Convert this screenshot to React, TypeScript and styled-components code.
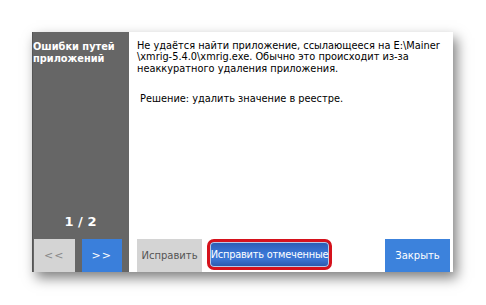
import React from "react";
import styled, { createGlobalStyle } from "styled-components";

const Global = createGlobalStyle`
  html, body { margin: 0; padding: 0; background: #ffffff; }
  body { font-family: "DejaVu Sans", Verdana, sans-serif; }
`;

const Page = styled.div`
  width: 486px;
  height: 305px;
  padding: 32px 0 0 32px;
  box-sizing: border-box;
  background: #ffffff;
`;

const Dialog = styled.div`
  width: 421px;
  height: 240px;
  display: flex;
  background: #ffffff;
  box-shadow: 4px 6px 12px rgba(0, 0, 0, 0.5);
`;

const Sidebar = styled.div`
  width: 97px;
  box-sizing: border-box;
  background: #666666;
  display: flex;
  flex-direction: column;
  padding: 0 7px 0 1px;
  border-left: 1px solid #555;
`;

const SideTitle = styled.div`
  color: #ffffff;
  font-weight: bold;
  font-size: 9.8px;
  line-height: 12.3px;
  padding-top: 9px;
  margin-left: -1px;
`;

const Counter = styled.div`
  margin-top: auto;
  color: #ffffff;
  font-weight: bold;
  font-size: 13px;
  text-align: center;
  padding-left: 5px;
  margin-bottom: 10px;
`;

const NavRow = styled.div`
  display: flex;
  gap: 7px;
`;

const NavButton = styled.div<{ $active?: boolean }>`
  width: 41px;
  height: 33px;
  display: flex;
  align-items: center;
  justify-content: center;
  background: ${(p) => (p.$active ? "#3a7fdb" : "#d4d4d4")};
  color: ${(p) => (p.$active ? "#ffffff" : "#888888")};
  font-size: 11px;
  letter-spacing: 1px;
`;

const Main = styled.div`
  flex: 1;
  display: flex;
  flex-direction: column;
  padding: 8px 3px 0 8px;
`;

const Message = styled.div`
  color: #000000;
  font-size: 9.8px;
  line-height: 11.3px;
  white-space: pre;
`;

const Solution = styled.div`
  color: #000000;
  font-size: 9.8px;
  line-height: 11.3px;
  margin-top: 19px;
  white-space: pre;
`;

const ButtonRow = styled.div`
  margin-top: auto;
  display: flex;
  align-items: flex-start;
  gap: 5px;
`;

const Button = styled.div<{ $variant: "gray" | "blue" }>`
  width: 65px;
  height: 33px;
  display: flex;
  align-items: center;
  justify-content: center;
  font-size: 10px;
  background: ${(p) => (p.$variant === "blue" ? "#3c82dc" : "#d4d4d4")};
  color: ${(p) => (p.$variant === "blue" ? "#ffffff" : "#555555")};
`;

const Spacer = styled.div`
  flex: 1;
`;

const HighlightButton = styled.div`
  width: 125px;
  height: 31px;
  box-sizing: border-box;
  border: 3px solid #d5121c;
  border-radius: 7px;
  background: linear-gradient(to bottom, #2b5bb0 0%, #3a76d6 45%, #3a74d2 70%, #2a56a8 100%);
  box-shadow: inset 0 0 0 1px #b9c8e6;
  color: #ffffff;
  font-size: 9.8px;
  letter-spacing: -0.2px;
  display: flex;
  align-items: center;
  justify-content: center;
  white-space: nowrap;
`;

export default function App() {
  return (
    <>
      <Global />
      <Page>
        <Dialog>
          <Sidebar>
            <SideTitle>
              Ошибки путей
              <br />
              приложений
            </SideTitle>
            <Counter>1 / 2</Counter>
            <NavRow>
              <NavButton>&lt;&lt;</NavButton>
              <NavButton $active>&gt;&gt;</NavButton>
            </NavRow>
          </Sidebar>
          <Main>
            <Message>
              {"Не удаётся найти приложение, ссылающееся на E:\\Mainer\n\\xmrig-5.4.0\\xmrig.exe. Обычно это происходит из-за\nнеаккуратного удаления приложения."}
            </Message>
            <Solution>{" Решение: удалить значение в реестре."}</Solution>
            <ButtonRow>
              <Button $variant="gray">Исправить</Button>
              <HighlightButton>Исправить отмеченные</HighlightButton>
              <Spacer />
              <Button $variant="blue">Закрыть</Button>
            </ButtonRow>
          </Main>
        </Dialog>
      </Page>
    </>
  );
}
